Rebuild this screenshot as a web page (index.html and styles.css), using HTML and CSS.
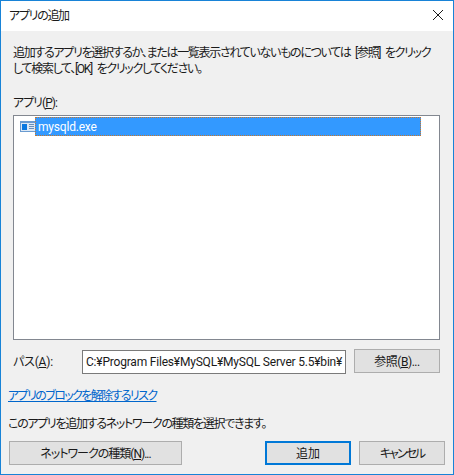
FILE: index.html
```html
<!DOCTYPE html>
<html lang="ja">
<head>
  <meta charset="UTF-8">
  <title>アプリの追加</title>
  <link rel="stylesheet" href="styles.css">
</head>
<body>

  <div class="dialog">
    <div class="title-bar">
      <span class="title-text">アプリの追加</span>
      <svg class="close-icon" width="10" height="10" viewBox="0 0 10 10">
        <path d="M0 0L10 10M10 0L0 10" stroke="#1a1a1a" stroke-width="1" fill="none"/>
      </svg>
    </div>

    <div class="content">
      <p class="intro">追加するアプリを選択するか、または一覧表示されていないものについては [参照] をクリック<br>して検索して、[OK] をクリックしてください。</p>

      <div class="list-label">アプリ(<u>P</u>):</div>
      <div class="app-list">
        <div class="app-row">
          <svg class="app-icon" width="16" height="11" viewBox="0 0 16 11">
            <rect width="16" height="11" fill="#6a9bd0"/>
            <rect x="1" y="2" width="14" height="8" fill="#dce8f5"/>
            <rect x="2" y="3" width="5" height="6" fill="#0a78e0"/>
            <path d="M9 3.5h5M9 5.5h5M9 7.5h5" stroke="#6a8fb8" fill="none"/>
          </svg>
          <span class="app-name">mysqld.exe</span>
        </div>
      </div>

      <div class="path-row">
        <label class="path-label">パス(<u>A</u>):</label>
        <input class="path-input" type="text" value="C:¥Program Files¥MySQL¥MySQL Server 5.5¥bin¥">
        <button class="btn btn-browse">参照(<u>B</u>)...</button>
      </div>

      <a class="risk-link" href="#">アプリのブロックを解除するリスク</a>
      <p class="network-note">このアプリを追加するネットワークの種類を選択できます。</p>

      <div class="button-row">
        <button class="btn btn-network">ネットワークの種類(<u>N</u>)...</button>
        <div class="button-group">
          <button class="btn btn-default">追加</button>
          <button class="btn btn-cancel">キャンセル</button>
        </div>
      </div>
    </div>
  </div>

</body>
</html>
```

FILE: styles.css
```css
html, body {
  margin: 0;
  padding: 0;
  height: 100%;
}

body {
  font-family: Roboto, "Noto Sans CJK JP", sans-serif;
  font-size: 12px;
  font-feature-settings: "palt";
  color: #1a1a1a;
}

.dialog {
  box-sizing: border-box;
  width: 454px;
  height: 475px;
  display: flex;
  flex-direction: column;
  border: 1px solid #1883d7;
  background-color: #f0f0f0;
}

.title-bar {
  height: 30px;
  flex: none;
  display: flex;
  align-items: center;
  justify-content: space-between;
  padding: 0 10px 0 8px;
  background-color: #fff;
}

.title-text {
  line-height: 30px;
  letter-spacing: -1.3px;
}

.close-icon {
  margin-bottom: 2px;
}

.content {
  flex: 1;
  display: flex;
  flex-direction: column;
  padding: 0 8px 0 7px;
}

.intro {
  margin: 14px 0 0 5px;
  line-height: 16px;
  white-space: nowrap;
  letter-spacing: -1.3px;
  word-spacing: 3px;
}

.list-label {
  margin: 18px 0 0 5px;
  line-height: 16px;
  letter-spacing: -1px;
}

.app-list {
  box-sizing: border-box;
  height: 225px;
  width: 427px;
  margin: 4px 0 0 5px;
  padding: 1px;
  border: 1px solid #828790;
  background-color: #fff;
}

.app-row {
  display: flex;
  align-items: center;
  height: 19px;
  padding-left: 5px;
}

.app-icon {
  flex: none;
}

.app-name {
  box-sizing: border-box;
  width: 386px;
  height: 19px;
  margin-left: -1px;
  padding-left: 2px;
  line-height: 19px;
  letter-spacing: -0.2px;
  color: #fff;
  background-color: #3399ff;
  border: 1px dotted #c8762a;
}

.path-row {
  display: flex;
  align-items: flex-start;
  margin: 9px 0 0 5px;
  width: 427px;
}

.path-label {
  width: 69px;
  line-height: 26px;
  flex: none;
  letter-spacing: -0.2px;
}

.path-input {
  box-sizing: border-box;
  width: 264px;
  height: 24px;
  margin: 1px 8px 0 0;
  padding: 0 0 0 3px;
  font: inherit;
  letter-spacing: -0.2px;
  color: #1a1a1a;
  border: 1px solid #7a7a7a;
  border-radius: 0;
  background-color: #fff;
  outline: none;
}

.btn {
  box-sizing: border-box;
  width: 86px;
  height: 24px;
  padding: 0 0 1px;
  font: inherit;
  color: #1a1a1a;
  background-color: #e1e1e1;
  border: 1px solid #adadad;
  border-radius: 0;
}

.btn-browse {
  flex: none;
  letter-spacing: -0.5px;
}

.risk-link {
  align-self: flex-start;
  margin: 13px 0 0;
  line-height: 16px;
  letter-spacing: -1.6px;
  color: #0066cc;
}

.network-note {
  margin: 12px 0 0;
  line-height: 16px;
  letter-spacing: -1.3px;
}

.button-row {
  display: flex;
  justify-content: space-between;
  margin: 9px 0 0 1px;
}

.btn-network {
  width: 173px;
  letter-spacing: -1px;
}

.button-group {
  display: flex;
  gap: 8px;
}

.btn-default {
  border: 2px solid #0078d7;
}

.btn-cancel {
  letter-spacing: -2px;
}
```
